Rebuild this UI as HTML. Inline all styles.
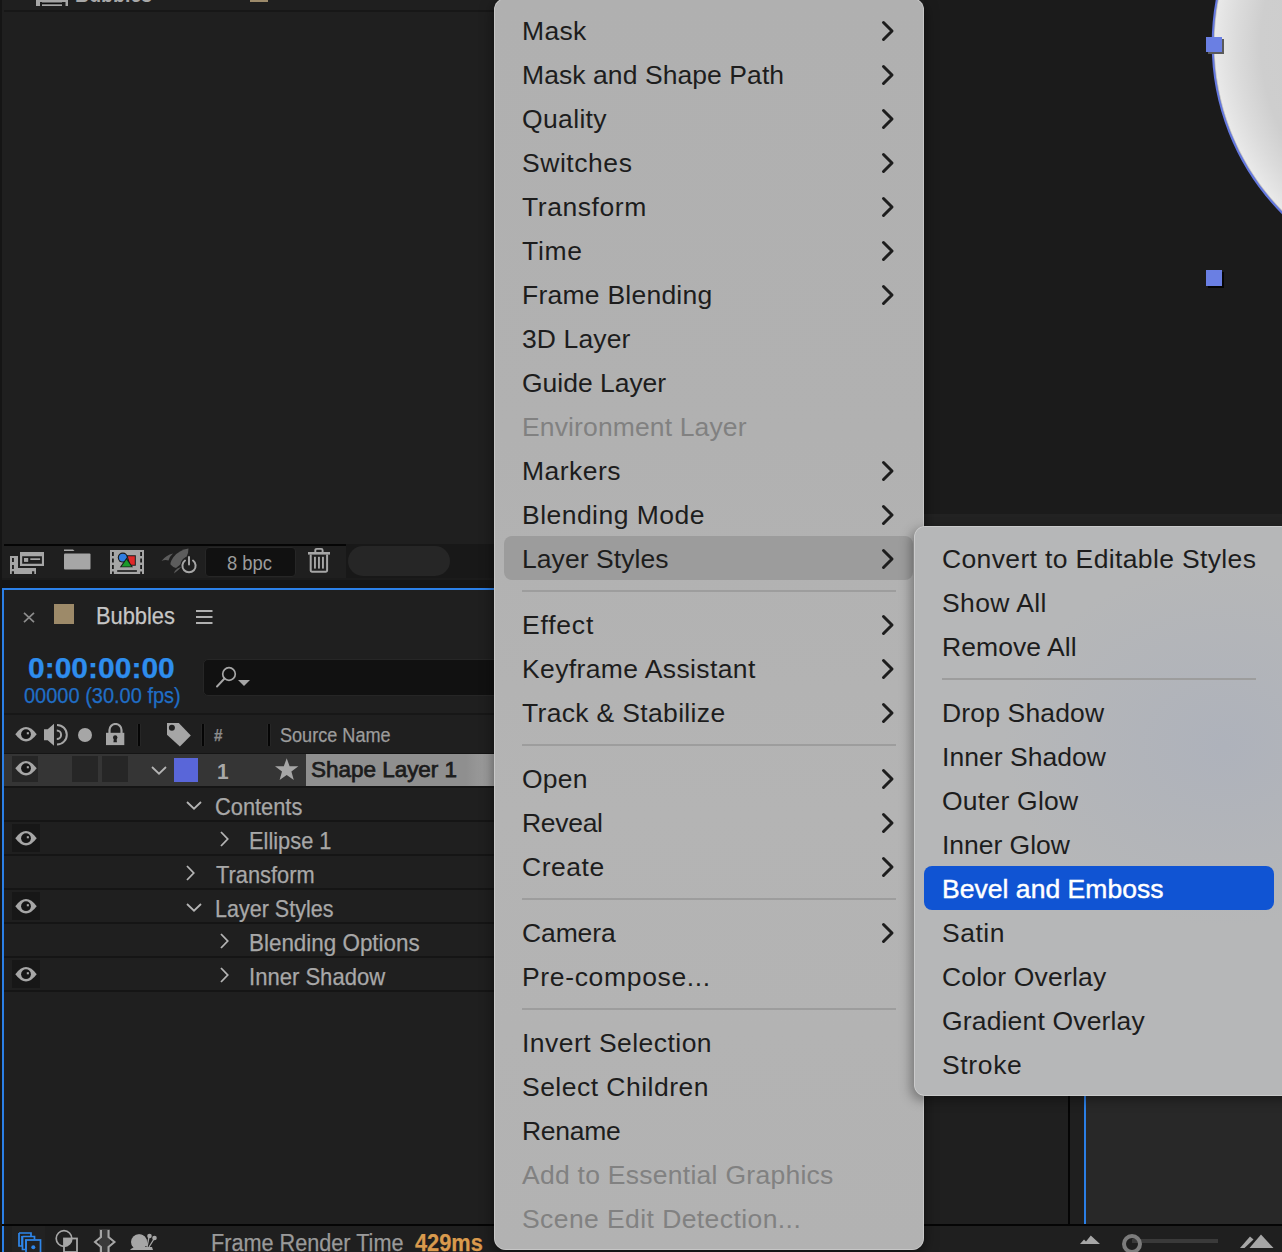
<!DOCTYPE html>
<html><head><meta charset="utf-8"><style>
*{box-sizing:border-box}
html,body{margin:0;padding:0;width:1282px;height:1252px;overflow:hidden;background:#1f1f1f;font-family:"Liberation Sans",sans-serif}
.a{position:absolute}
.t{position:absolute;white-space:nowrap;transform-origin:0 0;-webkit-text-stroke:0.25px currentColor}
.menu{position:absolute;left:494px;top:-2.5px;width:430px;height:1252.5px;border-radius:12px;background:linear-gradient(180deg,#b0b0b0 0%,#b1b1b1 35%,#b4b4b4 65%,#b2b2b2 100%);box-shadow:0 0 0 0.8px rgba(255,255,255,0.35) inset, 0 4px 14px rgba(0,0,0,0.5)}
.sub{position:absolute;left:914px;top:526px;width:390px;height:570px;border-radius:11px;background:radial-gradient(ellipse 220px 180px at 310px 220px,#aeb2bb 0%,rgba(182,183,184,0) 100%),#b6b7b8;box-shadow:0 0 0 0.8px rgba(255,255,255,0.35) inset, -3px 4px 12px rgba(0,0,0,0.35)}
.mi,.si{position:absolute;height:44px;line-height:44px;font-size:26.5px;letter-spacing:0.35px;color:#1d1d1d;white-space:nowrap}
.mi{left:522px}
.si{left:942px}
.dis{color:#818181}
.sel{color:#fff;-webkit-text-stroke:0.45px #fff}
.hl{position:absolute;left:504px;width:409px;height:44px;border-radius:8px;background:#9c9c9c}
.hlb{position:absolute;left:924px;width:350px;height:44px;border-radius:8px;background:#1054d3}
.sep{position:absolute;height:2px;background:#9d9d9d}
.chev{position:absolute;left:881px}
.chev path{fill:none;stroke:#1d1d1d;stroke-width:3;stroke-linecap:round;stroke-linejoin:round}
</style></head><body>
<div class="a" style="left:0;top:0;width:2px;height:1252px;background:#151515"></div>
<div class="a" style="left:2px;top:0;width:492px;height:11px;background:#1f1f1f"></div>
<div class="a" style="left:4px;top:10px;width:490px;height:2px;background:#171717"></div>
<svg class="a" style="left:36px;top:0" width="34" height="7" viewBox="0 0 34 7"><path d="M0 0 H32 V6 H29.5 V2 H4 V6 H0Z" fill="#a6a6a6"/><rect x="6" y="2" width="20" height="4" fill="#a6a6a6"/><rect x="6" y="2.5" width="20" height="1.8" fill="#111"/></svg>
<div class="t" style="left:75px;top:-15.82px;font-size:22px;line-height:22px;color:#a8a8a8;font-weight:700;transform:scaleX(0.89);-webkit-text-stroke:0px;">Bubbles</div>
<div class="a" style="left:250px;top:0;width:18px;height:2px;background:#9c8a6a"></div>
<div class="a" style="left:4px;top:544px;width:342px;height:2px;background:#050505"></div>
<div class="a" style="left:346px;top:544px;width:148px;height:34px;background:#181818"></div>
<div class="a" style="left:2px;top:578px;width:492px;height:2px;background:#1b1b1b"></div>
<div class="a" style="left:2px;top:580px;width:492px;height:8px;background:#141414"></div>
<div class="a" style="left:348px;top:546px;width:102px;height:30px;border-radius:15px;background:#262626"></div>
<svg class="a" style="left:10px;top:551px" width="36" height="24" viewBox="0 0 36 24">
      <path d="M10 1 H34 V15 H10Z M12.2 5.2 V12.8 H31.9 V5.2Z" fill="#a6a6a6" fill-rule="evenodd"/>
      <rect x="14" y="7" width="4.2" height="3.9" fill="#a6a6a6"/><rect x="20.3" y="7.3" width="9.8" height="1.7" fill="#a6a6a6"/>
      <path d="M0 5 H8 V17 H26 V23 H24.3 V20.2 H22 V23 H4 V20.2 H1.8 V23 H0Z" fill="#a6a6a6"/>
      <rect x="2" y="7" width="1.9" height="4" fill="#1f1f1f"/><rect x="2" y="14" width="1.9" height="4" fill="#1f1f1f"/>
    </svg>
<svg class="a" style="left:63px;top:549px" width="28" height="22" viewBox="0 0 28 22"><path d="M1 0.5 H10 L11.5 2 H1Z" fill="#a6a6a6"/><rect x="1" y="4.5" width="26.5" height="16" rx="1" fill="#a6a6a6"/></svg>
<svg class="a" style="left:110px;top:550px" width="35" height="25" viewBox="0 0 35 25">
      <rect x="0" y="0" width="34" height="24" fill="#a6a6a6"/>
      <rect x="2" y="2" width="1.8" height="4" fill="#1a1a1a"/><rect x="2" y="8.5" width="1.8" height="4" fill="#1a1a1a"/><rect x="2" y="15" width="1.8" height="4" fill="#1a1a1a"/><rect x="2" y="21.5" width="1.8" height="2.5" fill="#1a1a1a"/>
      <rect x="30.2" y="2" width="1.8" height="4" fill="#1a1a1a"/><rect x="30.2" y="8.5" width="1.8" height="4" fill="#1a1a1a"/><rect x="30.2" y="15" width="1.8" height="4" fill="#1a1a1a"/><rect x="30.2" y="21.5" width="1.8" height="2.5" fill="#1a1a1a"/>
      <rect x="7.2" y="20.2" width="19.7" height="1.6" fill="#1a1a1a"/>
      <path d="M16.5 5.2 H25.8 V15.8 H19.5Z" fill="#1a1a1a"/><path d="M17.8 6.3 H24.8 V14.8 H20.2Z" fill="#e02828"/>
      <circle cx="12.8" cy="7.6" r="5" fill="#1a1a1a"/><circle cx="12.8" cy="7.6" r="3.9" fill="#2f7de0"/>
      <path d="M16.5 7.8 L23 17.3 H9.8Z" fill="#1a1a1a"/><path d="M16.5 9.6 L21.3 16.4 H11.6Z" fill="#1a9a2a"/>
    </svg>
<svg class="a" style="left:161px;top:548px" width="36" height="27" viewBox="0 0 36 27">
      <path d="M27.5 0.5 Q18 2 12.5 9 Q9 14 9.5 16.5 Q12 19.5 15 20 Q22 15 25.5 9 Q27.5 5 27.5 0.5Z" fill="#5c5c5c"/>
      <path d="M12 5.5 Q5 7 0.5 13 Q4 11.5 7.5 12.5 Q9 8 12 5.5Z" fill="#5c5c5c"/>
      <path d="M21 18 Q17 23 13 25.5 Q14 22 16.5 20.5 Q19 19.5 21 18Z" fill="#5c5c5c"/>
      <circle cx="28" cy="17" r="8.5" fill="#1f1f1f"/>
      <path d="M24 12.5 A6.6 6.6 0 1 0 32 12.5" fill="none" stroke="#a6a6a6" stroke-width="2" stroke-linecap="round"/>
      <line x1="28" y1="9" x2="28" y2="16.5" stroke="#a6a6a6" stroke-width="2" stroke-linecap="round"/>
    </svg>
<div class="a" style="left:205px;top:547px;width:91px;height:30px;border-radius:4px;background:#111;border:1px solid #262626"></div>
<div class="t" style="left:227px;top:553.39px;font-size:20.8px;line-height:20.8px;color:#9c9c9c;font-weight:400;transform:scaleX(0.885);-webkit-text-stroke:0px;">8 bpc</div>
<svg class="a" style="left:307px;top:547px" width="24" height="26" viewBox="0 0 24 26">
      <path d="M8.3 5.5 V3.3 Q8.3 1.9 9.7 1.9 H14.2 Q15.6 1.9 15.6 3.3 V5.5" fill="none" stroke="#a6a6a6" stroke-width="1.9"/>
      <rect x="1" y="5" width="22" height="2.6" fill="#a6a6a6"/>
      <path d="M3.7 7.5 V23.6 Q3.7 24.7 4.8 24.7 H19 Q20.1 24.7 20.1 23.6 V7.5" fill="none" stroke="#a6a6a6" stroke-width="2"/>
      <rect x="7" y="9.8" width="1.9" height="11.8" fill="#a6a6a6"/><rect x="11" y="9.8" width="1.9" height="11.8" fill="#a6a6a6"/><rect x="15" y="9.8" width="1.9" height="11.8" fill="#a6a6a6"/>
    </svg>
<div class="a" style="left:2px;top:588px;width:492px;height:2px;background:#2b7fe6"></div>
<div class="a" style="left:2px;top:588px;width:2px;height:664px;background:#2b7fe6"></div>
<svg class="a" style="left:23px;top:611.5px" width="12" height="11" viewBox="0 0 12 11"><path d="M1 0.8 L11 10.2 M11 0.8 L1 10.2" stroke="#8c8c8c" stroke-width="1.7"/></svg>
<div class="a" style="left:54px;top:604px;width:20px;height:20px;background:#9d8a69"></div>
<div class="t" style="left:96px;top:603.68px;font-size:24px;line-height:24px;color:#c6c6c6;font-weight:400;transform:scaleX(0.91);">Bubbles</div>
<svg class="a" style="left:196px;top:609px" width="17" height="16" viewBox="0 0 17 16"><rect x="0" y="1" width="16.5" height="2" fill="#b0b0b0"/><rect x="0" y="7" width="16.5" height="2" fill="#b0b0b0"/><rect x="0" y="13" width="16.5" height="2" fill="#b0b0b0"/></svg>
<div class="t" style="left:28px;top:652.61px;font-size:30px;line-height:30px;color:#2e8ded;font-weight:700;transform:scaleX(1.0);">0:00:00:00</div>
<div class="t" style="left:24px;top:684.87px;font-size:22.6px;line-height:22.6px;color:#1f6ec6;font-weight:400;transform:scaleX(0.885);">00000 (30.00 fps)</div>
<div class="a" style="left:203px;top:659px;width:320px;height:37px;border-radius:5px;background:#111;border:1px solid #262626"></div>
<svg class="a" style="left:215px;top:664px" width="38" height="26" viewBox="0 0 38 26"><circle cx="14" cy="10" r="6.3" fill="none" stroke="#a6a6a6" stroke-width="1.7"/><line x1="9.5" y1="14.5" x2="2" y2="22.5" stroke="#a6a6a6" stroke-width="1.9" stroke-linecap="round"/><path d="M23 16 H35 L29 22Z" fill="#a6a6a6"/></svg>
<div class="a" style="left:4px;top:713px;width:490px;height:2px;background:#171717"></div>
<svg class="a" style="left:14.5px;top:727px" width="22" height="15" viewBox="0 0 22 15"><path d="M0.3 7.2 Q11 -7.2 21.7 7.2 Q11 21.6 0.3 7.2Z" fill="#a6a6a6"/><circle cx="11" cy="7.2" r="4.9" fill="#151515"/><rect x="11.8" y="5.2" width="2.1" height="2.1" fill="#a6a6a6"/></svg>
<svg class="a" style="left:43px;top:723px" width="26" height="24" viewBox="0 0 26 24">
      <path d="M1 6.3 H4.7 L11 0.7 V22.8 L4.7 17.3 H1Z" fill="#a6a6a6"/>
      <path d="M13.8 7.4 A4.3 4.3 0 0 1 13.8 16" fill="none" stroke="#a6a6a6" stroke-width="2"/>
      <path d="M14 1.9 A9.8 9.8 0 0 1 14 21.5" fill="none" stroke="#a6a6a6" stroke-width="2"/>
    </svg>
<div class="a" style="left:78px;top:728px;width:14px;height:14px;border-radius:50%;background:#a6a6a6"></div>
<svg class="a" style="left:106px;top:723px" width="19" height="23" viewBox="0 0 19 23">
      <path d="M3.5 10 V7 A6 6 0 0 1 15.5 7 V10" fill="none" stroke="#a6a6a6" stroke-width="2.2"/>
      <rect x="0" y="9.8" width="18.3" height="12.3" fill="#a6a6a6"/>
      <circle cx="9.2" cy="14.5" r="2.2" fill="#1f1f1f"/><path d="M8 15 L7.4 19.2 H11 L10.4 15Z" fill="#1f1f1f"/>
    </svg>
<div class="a" style="left:137px;top:724px;width:4px;height:22px;background:#262626"></div>
<div class="a" style="left:138px;top:724px;width:2px;height:22px;background:#050505"></div>
<div class="a" style="left:201px;top:724px;width:4px;height:22px;background:#262626"></div>
<div class="a" style="left:202px;top:724px;width:2px;height:22px;background:#050505"></div>
<div class="a" style="left:266.5px;top:724px;width:4px;height:22px;background:#262626"></div>
<div class="a" style="left:267.5px;top:724px;width:2px;height:22px;background:#050505"></div>
<svg class="a" style="left:166px;top:722px" width="26" height="26" viewBox="0 0 26 26"><path d="M1 1 H12.8 L24.8 13.6 L13.9 24.5 L1 12.8Z" fill="#a6a6a6"/><circle cx="5.9" cy="5.8" r="3" fill="#1f1f1f"/></svg>
<div class="t" style="left:214px;top:726.61px;font-size:17px;line-height:17px;color:#8c8c8c;font-weight:700;transform:scaleX(0.9);">#</div>
<div class="t" style="left:280px;top:724.79px;font-size:20.1px;line-height:20.1px;color:#9c9c9c;font-weight:400;transform:scaleX(0.9);">Source Name</div>
<div class="a" style="left:4px;top:753px;width:490px;height:1.5px;background:#151515"></div>
<div class="a" style="left:4px;top:754px;width:490px;height:32px;background:#353535"></div>
<div class="a" style="left:12px;top:756px;width:26px;height:26px;background:#262626"></div>
<svg class="a" style="left:14.5px;top:761px" width="22" height="15" viewBox="0 0 22 15"><path d="M0.3 7.2 Q11 -7.2 21.7 7.2 Q11 21.6 0.3 7.2Z" fill="#a6a6a6"/><circle cx="11" cy="7.2" r="4.9" fill="#151515"/><rect x="11.8" y="5.2" width="2.1" height="2.1" fill="#a6a6a6"/></svg>
<div class="a" style="left:72px;top:756px;width:26px;height:26px;background:#262626"></div>
<div class="a" style="left:102px;top:756px;width:26px;height:26px;background:#262626"></div>
<svg class="a" style="left:151px;top:766px" width="16" height="9" viewBox="0 0 16 9"><path d="M1 1 L8 7.7 L15 1" fill="none" stroke="#b4b4b4" stroke-width="1.8"/></svg>
<div class="a" style="left:174px;top:758px;width:24px;height:24px;background:#5966d9"></div>
<div class="t" style="left:217px;top:760.88px;font-size:22px;line-height:22px;color:#a8a8a8;font-weight:700;transform:scaleX(0.95);-webkit-text-stroke:0px;">1</div>
<svg class="a" style="left:275px;top:758px" width="24" height="23" viewBox="0 0 24 23"><path d="M11.7 0.3 L14.6 8.3 L23.4 8.3 L16.4 13.6 L18.8 22 L11.7 17 L4.6 22 L7 13.6 L0 8.3 L8.8 8.3Z" fill="#a6a6a6"/></svg>
<div class="a" style="left:306px;top:754px;width:188px;height:32px;background:linear-gradient(90deg,#8f8f8f 0%,#8f8f8f 85%,#a0a0a0 100%)"></div>
<div class="t" style="left:311px;top:758.40px;font-size:22.8px;line-height:22.8px;color:#1c1c1c;font-weight:400;transform:scaleX(0.985);-webkit-text-stroke:0.75px #1c1c1c;">Shape Layer 1</div>
<div class="a" style="left:4px;top:786px;width:490px;height:2px;background:#151515"></div>
<svg class="a" style="left:185.5px;top:801px" width="16" height="9" viewBox="0 0 16 9"><path d="M1 1 L8 7.7 L15 1" fill="none" stroke="#b4b4b4" stroke-width="1.8"/></svg>
<div class="t" style="left:215px;top:795.52px;font-size:23.6px;line-height:23.6px;color:#a8a8a8;font-weight:400;transform:scaleX(0.925);">Contents</div>
<div class="a" style="left:4px;top:820px;width:490px;height:2px;background:#151515"></div>
<div class="a" style="left:12px;top:824px;width:28px;height:28px;background:#171717"></div>
<svg class="a" style="left:15px;top:830.5px" width="22" height="15" viewBox="0 0 22 15"><path d="M0.3 7.2 Q11 -7.2 21.7 7.2 Q11 21.6 0.3 7.2Z" fill="#a6a6a6"/><circle cx="11" cy="7.2" r="4.9" fill="#151515"/><rect x="11.8" y="5.2" width="2.1" height="2.1" fill="#a6a6a6"/></svg>
<svg class="a" style="left:220px;top:831px" width="9" height="16" viewBox="0 0 9 16"><path d="M1 1 L7.7 8 L1 15" fill="none" stroke="#b4b4b4" stroke-width="1.8"/></svg>
<div class="t" style="left:249px;top:829.52px;font-size:23.6px;line-height:23.6px;color:#a8a8a8;font-weight:400;transform:scaleX(0.925);">Ellipse 1</div>
<div class="a" style="left:4px;top:854px;width:490px;height:2px;background:#151515"></div>
<svg class="a" style="left:185.5px;top:865px" width="9" height="16" viewBox="0 0 9 16"><path d="M1 1 L7.7 8 L1 15" fill="none" stroke="#b4b4b4" stroke-width="1.8"/></svg>
<div class="t" style="left:216px;top:863.52px;font-size:23.6px;line-height:23.6px;color:#a8a8a8;font-weight:400;transform:scaleX(0.925);">Transform</div>
<div class="a" style="left:4px;top:888px;width:490px;height:2px;background:#151515"></div>
<div class="a" style="left:12px;top:892px;width:28px;height:28px;background:#171717"></div>
<svg class="a" style="left:15px;top:898.5px" width="22" height="15" viewBox="0 0 22 15"><path d="M0.3 7.2 Q11 -7.2 21.7 7.2 Q11 21.6 0.3 7.2Z" fill="#a6a6a6"/><circle cx="11" cy="7.2" r="4.9" fill="#151515"/><rect x="11.8" y="5.2" width="2.1" height="2.1" fill="#a6a6a6"/></svg>
<svg class="a" style="left:185.5px;top:903px" width="16" height="9" viewBox="0 0 16 9"><path d="M1 1 L8 7.7 L15 1" fill="none" stroke="#b4b4b4" stroke-width="1.8"/></svg>
<div class="t" style="left:215px;top:897.52px;font-size:23.6px;line-height:23.6px;color:#a8a8a8;font-weight:400;transform:scaleX(0.912);">Layer Styles</div>
<div class="a" style="left:4px;top:922px;width:490px;height:2px;background:#151515"></div>
<svg class="a" style="left:220px;top:933px" width="9" height="16" viewBox="0 0 9 16"><path d="M1 1 L7.7 8 L1 15" fill="none" stroke="#b4b4b4" stroke-width="1.8"/></svg>
<div class="t" style="left:249px;top:931.52px;font-size:23.6px;line-height:23.6px;color:#a8a8a8;font-weight:400;transform:scaleX(0.95);">Blending Options</div>
<div class="a" style="left:4px;top:956px;width:490px;height:2px;background:#151515"></div>
<div class="a" style="left:12px;top:960px;width:28px;height:28px;background:#171717"></div>
<svg class="a" style="left:15px;top:966.5px" width="22" height="15" viewBox="0 0 22 15"><path d="M0.3 7.2 Q11 -7.2 21.7 7.2 Q11 21.6 0.3 7.2Z" fill="#a6a6a6"/><circle cx="11" cy="7.2" r="4.9" fill="#151515"/><rect x="11.8" y="5.2" width="2.1" height="2.1" fill="#a6a6a6"/></svg>
<svg class="a" style="left:220px;top:967px" width="9" height="16" viewBox="0 0 9 16"><path d="M1 1 L7.7 8 L1 15" fill="none" stroke="#b4b4b4" stroke-width="1.8"/></svg>
<div class="t" style="left:249px;top:965.52px;font-size:23.6px;line-height:23.6px;color:#a8a8a8;font-weight:400;transform:scaleX(0.935);">Inner Shadow</div>
<div class="a" style="left:4px;top:990px;width:490px;height:2px;background:#151515"></div>
<div class="a" style="left:2px;top:1224px;width:1280px;height:2px;background:#050505"></div>
<div class="a" style="left:12px;top:1226px;width:33px;height:26px;background:#222"></div>
<svg class="a" style="left:18px;top:1232px" width="24" height="22" viewBox="0 0 24 22">
      <path d="M1 1 H13 V4 M4 4 V14 H1 V1" fill="none" stroke="#2e86ea" stroke-width="1.7"/>
      <path d="M4.5 4.5 H16.5 V7.5 M8 7.5 V17.5 H4.5 V4.5" fill="none" stroke="#2e86ea" stroke-width="1.7"/>
      <rect x="8" y="8" width="14.5" height="14" fill="none" stroke="#2e86ea" stroke-width="1.7"/>
      <circle cx="15.3" cy="15.2" r="2" fill="#2e86ea"/>
    </svg>
<svg class="a" style="left:55px;top:1229px" width="25" height="24" viewBox="0 0 25 24">
      <circle cx="9" cy="9.5" r="7.8" fill="none" stroke="#a6a6a6" stroke-width="1.7"/>
      <path d="M9 9.5 H16.8 A7.8 7.8 0 0 1 9 17.3Z" fill="#a6a6a6"/>
      <rect x="9" y="9.5" width="13" height="13.5" fill="none" stroke="#a6a6a6" stroke-width="1.8"/>
    </svg>
<svg class="a" style="left:93px;top:1229px" width="24" height="24" viewBox="0 0 24 24">
      <rect x="6" y="0" width="11" height="24" fill="#3a3a3a"/>
      <path d="M8 1 V8 L2 13 L8 18 V24" fill="none" stroke="#a6a6a6" stroke-width="2"/>
      <path d="M15.5 1 V8 L21.5 13 L15.5 18 V24" fill="none" stroke="#a6a6a6" stroke-width="2"/>
    </svg>
<svg class="a" style="left:130px;top:1232px" width="27" height="19" viewBox="0 0 27 19">
      <path d="M2 10 A7.5 7.5 0 0 1 17 10 V14 H2Z" fill="#a6a6a6"/>
      <ellipse cx="9" cy="10" rx="8" ry="7.8" fill="#a6a6a6"/>
      <path d="M0 18 Q2 15 8 15 H22 L23 18Z" fill="#a6a6a6"/>
      <path d="M17 15 L19 5 M19 15 L24 7" stroke="#a6a6a6" stroke-width="1.3"/>
      <circle cx="19.5" cy="4" r="2.3" fill="#a6a6a6"/><circle cx="24.5" cy="6" r="2.3" fill="#a6a6a6"/>
    </svg>
<div class="t" style="left:211px;top:1232.11px;font-size:23.5px;line-height:23.5px;color:#9a9a9a;font-weight:400;transform:scaleX(0.921);">Frame Render Time</div>
<div class="t" style="left:414.5px;top:1232.36px;font-size:23.2px;line-height:23.2px;color:#d99a4d;font-weight:700;transform:scaleX(0.94);">429ms</div>
<div class="a" style="left:924px;top:0;width:358px;height:514px;background:#1b1b1b;overflow:hidden"><svg style="position:absolute;left:0;top:0" width="358" height="514" viewBox="924 0 358 514"><defs><radialGradient id="sph" cx="1452.7" cy="44" r="240" gradientUnits="userSpaceOnUse"><stop offset="0" stop-color="#c8c8c8"/><stop offset="0.8" stop-color="#cecece"/><stop offset="0.9" stop-color="#dbdbdb"/><stop offset="0.96" stop-color="#e4e4e4"/><stop offset="0.99" stop-color="#e9e9e9"/><stop offset="1" stop-color="#8a8a8a"/></radialGradient></defs><circle cx="1452.7" cy="44" r="240" fill="url(#sph)" stroke="#6478e0" stroke-width="2"/><rect x="1208" y="39" width="16" height="15" fill="#5a5a5a"/><rect x="1206" y="37" width="16" height="15" fill="#6a7fe3"/><rect x="1208" y="272" width="16" height="16" fill="#050505"/><rect x="1206" y="270" width="16" height="16" fill="#6a7fe3"/></svg></div>
<div class="a" style="left:924px;top:514px;width:358px;height:12px;background:#222"></div>
<div class="a" style="left:924px;top:1090px;width:144px;height:134px;background:#1f1f1f"></div>
<div class="a" style="left:1068px;top:1090px;width:2px;height:134px;background:#050505"></div>
<div class="a" style="left:1070px;top:1090px;width:14px;height:134px;background:#1f1f1f"></div>
<div class="a" style="left:1086px;top:1090px;width:196px;height:134px;background:#282828"></div>
<div class="a" style="left:1084px;top:1090px;width:2px;height:134px;background:#2b7fe6"></div>
<div class="a" style="left:924px;top:1226px;width:358px;height:26px;background:#1f1f1f"></div>
<svg class="a" style="left:1080px;top:1234px" width="22" height="11" viewBox="0 0 22 11"><path d="M0 10 L4 5.5 L6 7.5 L10.8 1.5 L20 10Z" fill="#a6a6a6"/></svg>
<div class="a" style="left:1132px;top:1239px;width:86px;height:4px;background:#3a3a3a"></div>
<div class="a" style="left:1122px;top:1233.5px;width:20px;height:20px;border-radius:50%;border:4px solid #7c7c7c;background:transparent"></div>
<svg class="a" style="left:1240px;top:1233px" width="36" height="16" viewBox="0 0 36 16"><path d="M0 15 L10 3.5 L13.5 6.5 L4.5 15Z" fill="#a6a6a6"/><path d="M9.5 15 L21 1.5 L33.5 15Z" fill="#a6a6a6"/></svg>
<div class="menu"></div>
<div class="mi" style="top:9px;letter-spacing:0.35px;">Mask</div>
<svg class="chev" style="top:20px" width="14" height="22" viewBox="0 0 14 22"><path d="M2.5 2.5 L11 11 L2.5 19.5" /></svg>
<div class="mi" style="top:53px;letter-spacing:0.072px;">Mask and Shape Path</div>
<svg class="chev" style="top:64px" width="14" height="22" viewBox="0 0 14 22"><path d="M2.5 2.5 L11 11 L2.5 19.5" /></svg>
<div class="mi" style="top:97px;letter-spacing:0.35px;">Quality</div>
<svg class="chev" style="top:108px" width="14" height="22" viewBox="0 0 14 22"><path d="M2.5 2.5 L11 11 L2.5 19.5" /></svg>
<div class="mi" style="top:141px;letter-spacing:0.55px;">Switches</div>
<svg class="chev" style="top:152px" width="14" height="22" viewBox="0 0 14 22"><path d="M2.5 2.5 L11 11 L2.5 19.5" /></svg>
<div class="mi" style="top:185px;letter-spacing:0.563px;">Transform</div>
<svg class="chev" style="top:196px" width="14" height="22" viewBox="0 0 14 22"><path d="M2.5 2.5 L11 11 L2.5 19.5" /></svg>
<div class="mi" style="top:229px;letter-spacing:0.683px;">Time</div>
<svg class="chev" style="top:240px" width="14" height="22" viewBox="0 0 14 22"><path d="M2.5 2.5 L11 11 L2.5 19.5" /></svg>
<div class="mi" style="top:273px;letter-spacing:0.242px;">Frame Blending</div>
<svg class="chev" style="top:284px" width="14" height="22" viewBox="0 0 14 22"><path d="M2.5 2.5 L11 11 L2.5 19.5" /></svg>
<div class="mi" style="top:317px;letter-spacing:0.121px;">3D Layer</div>
<div class="mi" style="top:361px;letter-spacing:-0.02px;">Guide Layer</div>
<div class="mi dis" style="top:405px;letter-spacing:0.131px;">Environment Layer</div>
<div class="mi" style="top:449px;letter-spacing:0.45px;">Markers</div>
<svg class="chev" style="top:460px" width="14" height="22" viewBox="0 0 14 22"><path d="M2.5 2.5 L11 11 L2.5 19.5" /></svg>
<div class="mi" style="top:493px;letter-spacing:0.467px;">Blending Mode</div>
<svg class="chev" style="top:504px" width="14" height="22" viewBox="0 0 14 22"><path d="M2.5 2.5 L11 11 L2.5 19.5" /></svg>
<div class="hl" style="top:536px"></div>
<div class="mi" style="top:537px;letter-spacing:0.059px;">Layer Styles</div>
<svg class="chev" style="top:548px" width="14" height="22" viewBox="0 0 14 22"><path d="M2.5 2.5 L11 11 L2.5 19.5" /></svg>
<div class="sep" style="top:590px;left:522px;width:374px"></div>
<div class="mi" style="top:603px;letter-spacing:0.8px;">Effect</div>
<svg class="chev" style="top:614px" width="14" height="22" viewBox="0 0 14 22"><path d="M2.5 2.5 L11 11 L2.5 19.5" /></svg>
<div class="mi" style="top:647px;letter-spacing:0.379px;">Keyframe Assistant</div>
<svg class="chev" style="top:658px" width="14" height="22" viewBox="0 0 14 22"><path d="M2.5 2.5 L11 11 L2.5 19.5" /></svg>
<div class="mi" style="top:691px;letter-spacing:0.331px;">Track &amp; Stabilize</div>
<svg class="chev" style="top:702px" width="14" height="22" viewBox="0 0 14 22"><path d="M2.5 2.5 L11 11 L2.5 19.5" /></svg>
<div class="sep" style="top:744px;left:522px;width:374px"></div>
<div class="mi" style="top:757px;letter-spacing:0.217px;">Open</div>
<svg class="chev" style="top:768px" width="14" height="22" viewBox="0 0 14 22"><path d="M2.5 2.5 L11 11 L2.5 19.5" /></svg>
<div class="mi" style="top:801px;letter-spacing:-0.3px;">Reveal</div>
<svg class="chev" style="top:812px" width="14" height="22" viewBox="0 0 14 22"><path d="M2.5 2.5 L11 11 L2.5 19.5" /></svg>
<div class="mi" style="top:845px;letter-spacing:0.53px;">Create</div>
<svg class="chev" style="top:856px" width="14" height="22" viewBox="0 0 14 22"><path d="M2.5 2.5 L11 11 L2.5 19.5" /></svg>
<div class="sep" style="top:898px;left:522px;width:374px"></div>
<div class="mi" style="top:911px;letter-spacing:-0.11px;">Camera</div>
<svg class="chev" style="top:922px" width="14" height="22" viewBox="0 0 14 22"><path d="M2.5 2.5 L11 11 L2.5 19.5" /></svg>
<div class="mi" style="top:955px;letter-spacing:0.658px;">Pre-compose...</div>
<div class="sep" style="top:1008px;left:522px;width:374px"></div>
<div class="mi" style="top:1021px;letter-spacing:0.463px;">Invert Selection</div>
<div class="mi" style="top:1065px;letter-spacing:0.479px;">Select Children</div>
<div class="mi" style="top:1109px;letter-spacing:-0.3px;">Rename</div>
<div class="mi dis" style="top:1153px;letter-spacing:0.267px;">Add to Essential Graphics</div>
<div class="mi dis" style="top:1197px;letter-spacing:0.418px;">Scene Edit Detection...</div>
<div class="sub"></div>
<div class="si" style="top:537px;letter-spacing:0.362px;">Convert to Editable Styles</div>
<div class="si" style="top:581px;letter-spacing:0.407px;">Show All</div>
<div class="si" style="top:625px;letter-spacing:0.072px;">Remove All</div>
<div class="sep" style="top:678px;left:942px;width:314px"></div>
<div class="si" style="top:691px;letter-spacing:0.15px;">Drop Shadow</div>
<div class="si" style="top:735px;letter-spacing:0.032px;">Inner Shadow</div>
<div class="si" style="top:779px;letter-spacing:0.239px;">Outer Glow</div>
<div class="si" style="top:823px;letter-spacing:-0.028px;">Inner Glow</div>
<div class="hlb" style="top:866px"></div>
<div class="si sel" style="top:867px;letter-spacing:0.037px;">Bevel and Emboss</div>
<div class="si" style="top:911px;letter-spacing:0.5px;">Satin</div>
<div class="si" style="top:955px;letter-spacing:0.183px;">Color Overlay</div>
<div class="si" style="top:999px;letter-spacing:0.163px;">Gradient Overlay</div>
<div class="si" style="top:1043px;letter-spacing:0.65px;">Stroke</div>
</body></html>
